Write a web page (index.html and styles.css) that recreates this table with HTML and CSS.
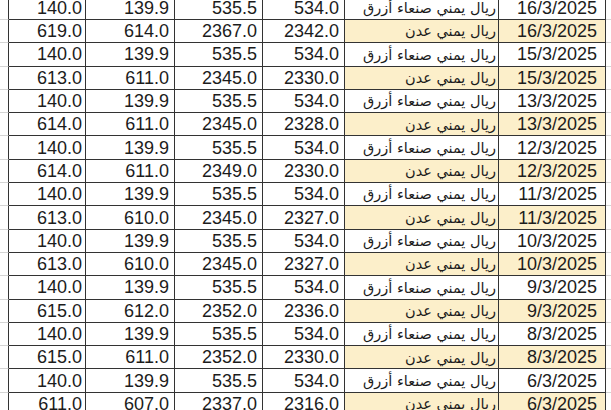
FILE: index.html
```html
<!DOCTYPE html>
<html lang="ar">
<head>
<meta charset="utf-8">
<link rel="stylesheet" href="styles.css">
</head>
<body>
<div class="sheet">
  <div class="row"><div class="edge"></div><div class="c n1">140.0</div><div class="c n2">139.9</div><div class="c n3">535.5</div><div class="c n4">534.0</div><div class="c name" dir="rtl">ريال يمني صنعاء أزرق</div><div class="c date">16/3/2025</div><div class="edge"></div></div>
  <div class="row aden"><div class="edge"></div><div class="c n1">619.0</div><div class="c n2">614.0</div><div class="c n3">2367.0</div><div class="c n4">2342.0</div><div class="c name" dir="rtl">ريال يمني عدن</div><div class="c date">16/3/2025</div><div class="edge"></div></div>
  <div class="row"><div class="edge"></div><div class="c n1">140.0</div><div class="c n2">139.9</div><div class="c n3">535.5</div><div class="c n4">534.0</div><div class="c name" dir="rtl">ريال يمني صنعاء أزرق</div><div class="c date">15/3/2025</div><div class="edge"></div></div>
  <div class="row aden"><div class="edge"></div><div class="c n1">613.0</div><div class="c n2">611.0</div><div class="c n3">2345.0</div><div class="c n4">2330.0</div><div class="c name" dir="rtl">ريال يمني عدن</div><div class="c date">15/3/2025</div><div class="edge"></div></div>
  <div class="row"><div class="edge"></div><div class="c n1">140.0</div><div class="c n2">139.9</div><div class="c n3">535.5</div><div class="c n4">534.0</div><div class="c name" dir="rtl">ريال يمني صنعاء أزرق</div><div class="c date">13/3/2025</div><div class="edge"></div></div>
  <div class="row aden"><div class="edge"></div><div class="c n1">614.0</div><div class="c n2">611.0</div><div class="c n3">2345.0</div><div class="c n4">2328.0</div><div class="c name" dir="rtl">ريال يمني عدن</div><div class="c date">13/3/2025</div><div class="edge"></div></div>
  <div class="row"><div class="edge"></div><div class="c n1">140.0</div><div class="c n2">139.9</div><div class="c n3">535.5</div><div class="c n4">534.0</div><div class="c name" dir="rtl">ريال يمني صنعاء أزرق</div><div class="c date">12/3/2025</div><div class="edge"></div></div>
  <div class="row aden"><div class="edge"></div><div class="c n1">614.0</div><div class="c n2">611.0</div><div class="c n3">2349.0</div><div class="c n4">2330.0</div><div class="c name" dir="rtl">ريال يمني عدن</div><div class="c date">12/3/2025</div><div class="edge"></div></div>
  <div class="row"><div class="edge"></div><div class="c n1">140.0</div><div class="c n2">139.9</div><div class="c n3">535.5</div><div class="c n4">534.0</div><div class="c name" dir="rtl">ريال يمني صنعاء أزرق</div><div class="c date">11/3/2025</div><div class="edge"></div></div>
  <div class="row aden"><div class="edge"></div><div class="c n1">613.0</div><div class="c n2">610.0</div><div class="c n3">2345.0</div><div class="c n4">2327.0</div><div class="c name" dir="rtl">ريال يمني عدن</div><div class="c date">11/3/2025</div><div class="edge"></div></div>
  <div class="row"><div class="edge"></div><div class="c n1">140.0</div><div class="c n2">139.9</div><div class="c n3">535.5</div><div class="c n4">534.0</div><div class="c name" dir="rtl">ريال يمني صنعاء أزرق</div><div class="c date">10/3/2025</div><div class="edge"></div></div>
  <div class="row aden"><div class="edge"></div><div class="c n1">613.0</div><div class="c n2">610.0</div><div class="c n3">2345.0</div><div class="c n4">2327.0</div><div class="c name" dir="rtl">ريال يمني عدن</div><div class="c date">10/3/2025</div><div class="edge"></div></div>
  <div class="row"><div class="edge"></div><div class="c n1">140.0</div><div class="c n2">139.9</div><div class="c n3">535.5</div><div class="c n4">534.0</div><div class="c name" dir="rtl">ريال يمني صنعاء أزرق</div><div class="c date">9/3/2025</div><div class="edge"></div></div>
  <div class="row aden"><div class="edge"></div><div class="c n1">615.0</div><div class="c n2">612.0</div><div class="c n3">2352.0</div><div class="c n4">2336.0</div><div class="c name" dir="rtl">ريال يمني عدن</div><div class="c date">9/3/2025</div><div class="edge"></div></div>
  <div class="row"><div class="edge"></div><div class="c n1">140.0</div><div class="c n2">139.9</div><div class="c n3">535.5</div><div class="c n4">534.0</div><div class="c name" dir="rtl">ريال يمني صنعاء أزرق</div><div class="c date">8/3/2025</div><div class="edge"></div></div>
  <div class="row aden"><div class="edge"></div><div class="c n1">615.0</div><div class="c n2">611.0</div><div class="c n3">2352.0</div><div class="c n4">2330.0</div><div class="c name" dir="rtl">ريال يمني عدن</div><div class="c date">8/3/2025</div><div class="edge"></div></div>
  <div class="row"><div class="edge"></div><div class="c n1">140.0</div><div class="c n2">139.9</div><div class="c n3">535.5</div><div class="c n4">534.0</div><div class="c name" dir="rtl">ريال يمني صنعاء أزرق</div><div class="c date">6/3/2025</div><div class="edge"></div></div>
  <div class="row aden"><div class="edge"></div><div class="c n1">611.0</div><div class="c n2">607.0</div><div class="c n3">2337.0</div><div class="c n4">2316.0</div><div class="c name" dir="rtl">ريال يمني عدن</div><div class="c date">6/3/2025</div><div class="edge"></div></div>
</div>
</body>
</html>
```
FILE: styles.css
```css
html, body {
  margin: 0;
  padding: 0;
  background: #ffffff;
  overflow: hidden;
}
body {
  width: 611px;
  height: 410px;
}
.sheet {
  margin-top: -3.3px;
  font-family: "Liberation Sans", Arial, sans-serif;
  font-size: 18px;
  color: #1c1c1c;
}
.row {
  display: grid;
  grid-template-columns: 9px 77px 89px 88px 82px 154px 107px 1fr;
  height: 23.3px;
}
.edge {
  border-bottom: 1px solid #d4d4d4;
}
.edge:first-child {
  border-right: 1px solid #333333;
}
.c {
  border-right: 1px solid #333333;
  border-bottom: 1px solid #333333;
  display: flex;
  align-items: center;
  justify-content: flex-end;
  line-height: 1;
  white-space: nowrap;
  overflow: hidden;
}
.n1 { padding-right: 3px; }
.n2 { padding-right: 5px; }
.n3 { padding-right: 5px; }
.n4 { padding-right: 5px; }
.date { padding-right: 8px; }
.name {
  font-family: "DejaVu Sans", sans-serif;
  font-size: 14.5px;
  justify-content: flex-start;
  padding-right: 2px;
  padding-top: 1px;
}
.aden .name,
.aden .date {
  background: #fcefca;
}
```
